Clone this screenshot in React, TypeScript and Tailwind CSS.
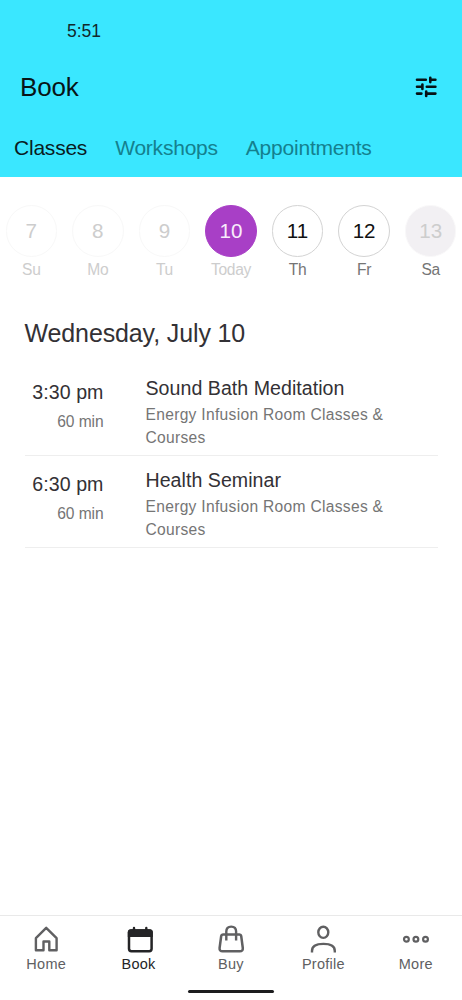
import type { ReactNode } from "react";

const days = [
  { n: "7", label: "Su", circle: "border-[#f8f8f8] text-[#cdcdcd]", text: "text-[#cdcdcd]" },
  { n: "8", label: "Mo", circle: "border-[#f8f8f8] text-[#cdcdcd]", text: "text-[#cdcdcd]" },
  { n: "9", label: "Tu", circle: "border-[#f8f8f8] text-[#cdcdcd]", text: "text-[#cdcdcd]" },
  { n: "10", label: "Today", circle: "border-[#a83fc6] bg-[#a83fc6] text-[#f8ecfb]", text: "text-[#cdcdcd]" },
  { n: "11", label: "Th", circle: "border-[#d3d3d3] text-[#111111]", text: "text-[#757575]" },
  { n: "12", label: "Fr", circle: "border-[#d3d3d3] text-[#111111]", text: "text-[#757575]" },
  { n: "13", label: "Sa", circle: "border-[#f9f8f9] bg-[#f2f0f3] text-[#cdcdcd]", text: "text-[#757575]" },
];

const sessions = [
  { time: "3:30 pm", title: "Sound Bath Meditation" },
  { time: "6:30 pm", title: "Health Seminar" },
];

function Icon({ children }: { children: ReactNode }) {
  return (
    <svg width="32" height="32" viewBox="0 0 32 32" fill="none" stroke="currentColor" strokeWidth="2.4">
      {children}
    </svg>
  );
}

const nav = [
  {
    label: "Home",
    active: false,
    icon: <path d="M5.9 27.2V15.2L16.2 4.8l10.4 10.4v12h-7.3v-8.7h-5.8v8.7z" strokeLinejoin="round" />,
  },
  {
    label: "Book",
    active: true,
    icon: (
      <>
        <rect x="6" y="7.4" width="22.6" height="20.8" rx="2.4" strokeWidth="2.5" />
        <path d="M4.8 14V9.2q0-3 3-3h19q3 0 3 3V14z" fill="currentColor" stroke="none" />
        <path d="M11 7V4.9M23.3 7V4.9" strokeLinecap="round" />
      </>
    ),
  },
  {
    label: "Buy",
    active: false,
    icon: (
      <>
        <path d="M7.9 11.5h16.6q1.5 0 1.7 1.5l1.6 12q.3 3.3-3 3.3H7.6q-3.3 0-3-3.3l1.6-12q.2-1.5 1.7-1.5z" strokeWidth="2.5" />
        <path d="M11.3 17.4V8.6q0-5 4.9-5t4.9 5v8.8" />
      </>
    ),
  },
  {
    label: "Profile",
    active: false,
    icon: (
      <>
        <ellipse cx="16.3" cy="9.3" rx="5" ry="5.6" />
        <path d="M5 29.6v-1.7q0-7 11.4-7t11.4 7v1.7" />
      </>
    ),
  },
  {
    label: "More",
    active: false,
    icon: (
      <>
        <circle cx="6.4" cy="16.2" r="2.4" strokeWidth="2.2" />
        <circle cx="15.9" cy="16.2" r="2.4" strokeWidth="2.2" />
        <circle cx="25.5" cy="16.2" r="2.4" strokeWidth="2.2" />
      </>
    ),
  },
];

export default function App() {
  return (
    <div className="flex h-[1000px] w-[462px] flex-col overflow-hidden bg-white font-['Liberation_Sans',Arial,sans-serif]">
      <header className="h-[177px] shrink-0 bg-[#3ae7ff] pt-[21px]">
        <div className="pl-[67px] text-[17.5px] leading-5 text-[#12282b]">5:51</div>
        <div className="mt-[30px] flex h-8 items-center justify-between pr-6 pl-5">
          <h1 className="text-[26px] leading-8 tracking-[-0.2px] text-[#081416]">Book</h1>
          <button aria-label="Filters" className="text-[#071114]">
            <svg width="24" height="24" viewBox="0 0 24 24" fill="none" stroke="currentColor" strokeWidth="2.6" strokeLinecap="round">
              <path d="M3 4.8h8.8M16.3 2.7v4.4M17 4.8h4.4M3 11.7h4.4M8.4 9.6v4.4M12.8 11.7h8.6M3 18.6h4.4M12.2 16.5v4.4M12.8 18.6h8.6" />
            </svg>
          </button>
        </div>
        <nav className="mt-[33px] flex gap-[28px] pl-[14px] text-[21px] leading-6 tracking-[-0.22px] whitespace-nowrap text-[#14808e]">
          <span className="text-[#0a1c1f]">Classes</span>
          <span>Workshops</span>
          <span>Appointments</span>
        </nav>
      </header>

      <main className="flex-1">
        <div className="flex pt-7">
          <div className="-mx-[2px] grid w-[466px] shrink-0 grid-cols-7">
            {days.map((d) => (
              <div key={d.label} className="flex flex-col items-center">
                <div className={`flex h-[51.5px] w-[51.5px] items-center justify-center rounded-full border pt-px text-[20.6px] ${d.circle}`}>
                  {d.n}
                </div>
                <div className={`mt-[3.5px] text-[15.6px] leading-5 tracking-[-0.3px] ${d.text}`}>{d.label}</div>
              </div>
            ))}
          </div>
        </div>

        <h2 className="mt-[38px] pl-[24.5px] text-[25px] leading-[30px] tracking-[-0.12px] text-[#333135]">Wednesday, July 10</h2>

        <div className="mt-4 pr-6 pl-[25px]">
          {sessions.map((s) => (
            <div key={s.time} className="flex h-[92px] border-b border-[#eeeeee]">
              <div className="w-[78.5px] shrink-0 pt-4 text-right whitespace-nowrap">
                <div className="text-[19.6px] leading-6 tracking-[0.05px] text-[#333135]">{s.time}</div>
                <div className="mt-2 text-[15.6px] leading-5 tracking-[-0.1px] text-[#757575]">60 min</div>
              </div>
              <div className="ml-[42px] w-[250px] pt-3">
                <div className="text-[19.6px] leading-6 tracking-[0.03px] whitespace-nowrap text-[#333135]">{s.title}</div>
                <div className="mt-[3px] text-[15.6px] leading-[23px] tracking-[0.3px] text-[#757575]">
                  Energy Infusion Room Classes &amp; Courses
                </div>
              </div>
            </div>
          ))}
        </div>
      </main>

      <footer className="flex h-[85px] shrink-0 flex-col items-center border-t border-[#e9e9e9]">
        <div className="grid w-full grid-cols-5 pt-[7px]">
          {nav.map((item) => (
            <div
              key={item.label}
              className={`flex flex-col items-center ${item.active ? "text-[#242426]" : "text-[#606062]"}`}
            >
              <Icon>{item.icon}</Icon>
              <span className="-mt-px text-[14.5px] leading-5 tracking-[0.25px]">{item.label}</span>
            </div>
          ))}
        </div>
        <div className="mt-4 h-[3px] w-[86px] rounded-full bg-[#1c1c1e]" />
      </footer>
    </div>
  );
}
